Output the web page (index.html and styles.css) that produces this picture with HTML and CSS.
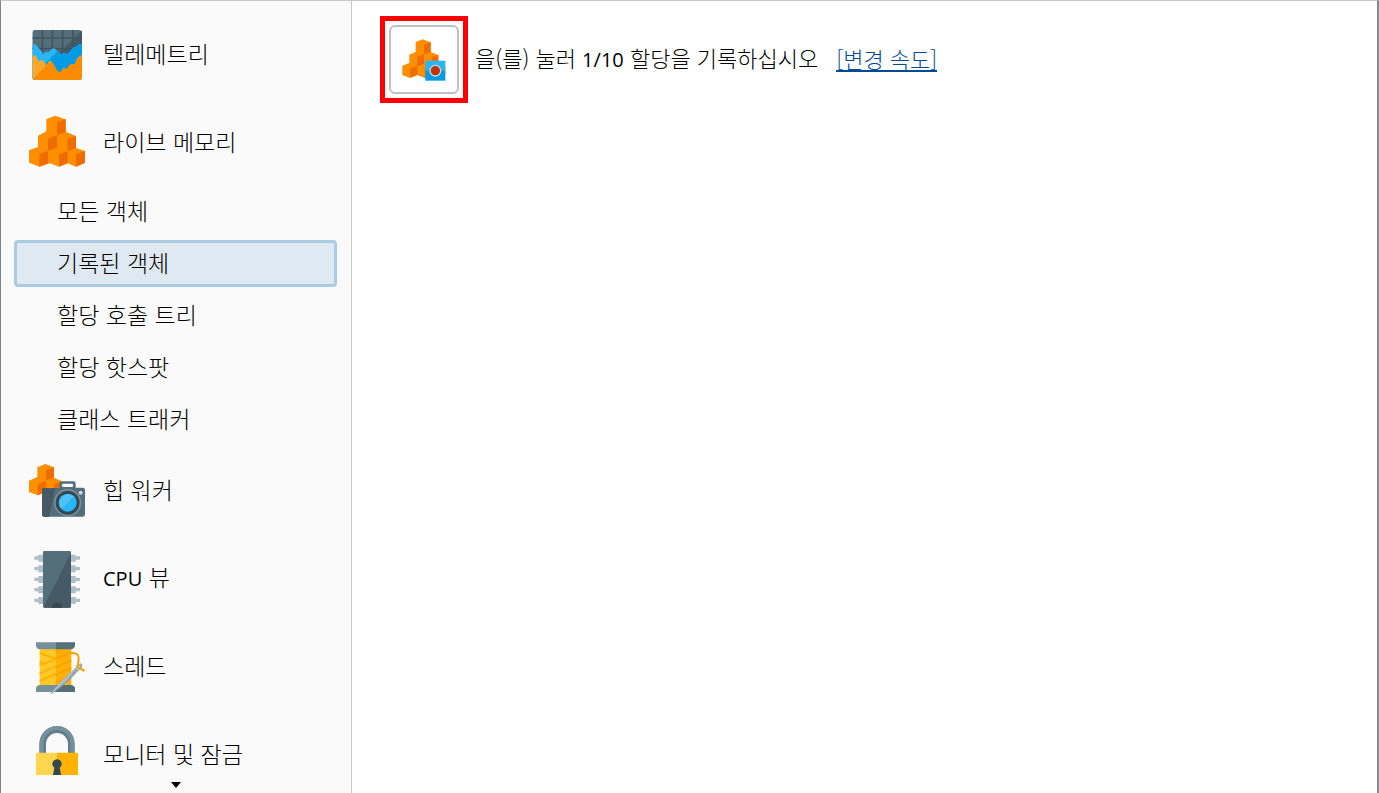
FILE: index.html
```html
<!DOCTYPE html>
<html lang="ko">
<head>
<meta charset="utf-8">
<title>기록된 객체</title>
<link rel="stylesheet" href="styles.css">
</head>
<body>
<div class="window">
  <aside class="sidebar">
    <nav class="nav">
      <a class="section" href="#telemetry">
        <svg class="icon" viewBox="27 21 168 168" aria-hidden="true">
          <defs><clipPath id="chart"><rect x="37" y="30" width="149" height="150" rx="9"/></clipPath></defs>
          <g clip-path="url(#chart)">
            <path fill="#546e7a" d="M37 30h149v150H37z"/>
            <path fill="#455a64" d="M186 30v90H96z"/>
            <path stroke="#3f545f" stroke-width="5" fill="none" d="M67 30v80M97 30v80M128 30v80M159 30v80M37 54h149M37 86h149"/>
            <path fill="#29b6f6" d="M37 76l10-4 8 11 7 8 8 11 8-7 8 2 8-10 9-3 7 8 7 6 6 5 9-4 10 3 9-9 9-11 8-2 10-8 8 2v106H37z"/>
            <path fill="#039be5" d="M112 94l5 4 6 5 9-4 10 3 9-9 9-11 8-2 10-8 8 2v106H37v-8z"/>
            <path fill="#ffa726" d="M37 106l11 2 8 16 8-3 8 3 6 12 12-15 8 8 8 13 5 10 10 6 10-15 8 5 9-12 7-5 9 3 7-17 9-10h6v72H37z"/>
            <path fill="#fb8c00" d="M92 124l6 5 8 13 5 10 10 6 10-15 8 5 9-12 7-5 9 3 7-17 9-10h6v72H37z"/>
          </g>
        </svg>
        <span class="label">텔레메트리</span>
      </a>
      <a class="section" href="#live-memory">
        <svg class="icon" viewBox="27 30 168 168" aria-hidden="true">
          <path fill="#ff8f00" d="M79 43l26-11 32 11v37l31 13v36l27 9v35l-27 12-25-10-26 10-27-10-31 10-32-12v-37l27-10V92l25-13z"/>
          <path fill="#ef6c00" d="M111 52l26-9v38l-26 9zM84 101l27-11v38l-27 9zM143 101l25-8v36l-25 9zM58 148l26-11v38l-26 10zM117 148l26-10v37l-26 10zM168 148l27-10v35l-27 12z"/>
        </svg>
        <span class="label">라이브 메모리</span>
      </a>
      <div class="views">
        <a class="view" href="#all-objects">모든 객체</a>
        <a class="view selected" href="#recorded-objects" aria-current="page">기록된 객체</a>
        <a class="view" href="#allocation-tree">할당 호출 트리</a>
        <a class="view" href="#allocation-hot-spots">할당 핫스팟</a>
        <a class="view" href="#class-tracker">클래스 트래커</a>
      </div>
      <a class="section" href="#heap-walker">
        <svg class="icon" viewBox="27 24 168 168" aria-hidden="true">
          <path fill="#ff8f00" d="M52 37l24-10 26 10v31l24 11v30l-24 9-25-9-24 12-26-10V77l25-11z"/>
          <path fill="#ef6c00" d="M78 45l24-8v31l-24 8zM54 87l24-9v32l-25 11zM102 86l24-6v30H102z"/>
          <path fill="#546e7a" d="M71 99h47V86q0-7 7-7h36q6 0 6 7v12h21q7 0 7 7v73q0 7-7 7H73q-7 0-7-7v-72q0-7 5-7z"/>
          <path fill="#455a64" d="M71 99h16v86H73q-7 0-7-7v-72q0-7 5-7z"/>
          <path fill="#455a64" d="M66 118l28-18h12L87 185H73q-7 0-7-7z"/>
          <rect x="126" y="86" width="33" height="10" rx="3" fill="#fafafa"/>
          <circle cx="143" cy="143" r="41" fill="#78909c"/>
          <circle cx="143" cy="143" r="36" fill="#37474f"/>
          <circle cx="143" cy="143" r="27" fill="#29b6f6"/>
          <path fill="#4fc3f7" d="M124 162a27 27 0 0 1 38-38z"/>
          <circle cx="182" cy="113" r="6" fill="#cfd8dc"/>
        </svg>
        <span class="label">힙 워커</span>
      </a>
      <a class="section" href="#cpu-views">
        <svg class="icon" viewBox="27 33 168 168" aria-hidden="true">
          <g fill="#b0bec5">
            <path id="pin" d="M69 44H55v5H43v10h12v6h14zM153 44h14v5h13v10h-13v6h-14z"/>
            <use href="#pin" y="32"/><use href="#pin" y="64"/><use href="#pin" y="95"/><use href="#pin" y="127"/>
          </g>
          <rect x="69" y="33" width="84" height="170" rx="4" fill="#546e7a"/>
          <path fill="#455a64" d="M153 38v161q0 4-4 4H73l-2-2z"/>
          <path fill="#37474f" d="M95 203a16 16 0 0 1 32 0z"/>
        </svg>
        <span class="label"><span class="latin">CPU</span> 뷰</span>
      </a>
      <a class="section" href="#threads">
        <svg class="icon" viewBox="27 27 168 168" aria-hidden="true">
          <path fill="#ffca28" d="M59 57h47v108H59z"/>
          <path fill="#ffb300" d="M106 57h48v108h-48z"/>
          <path fill="none" stroke="#ffb300" stroke-width="6" d="M59 69l47 17M59 96l20 7M59 106l47-18M59 130l47-20M59 153l47-21"/>
          <path fill="none" stroke="#ffa000" stroke-width="6" d="M106 86l48-18M106 112l48-20M106 134l48-20M106 158l48-21M106 62l18 7"/>
          <path fill="#78909c" d="M48 37h58v21H58q-10-3-10-12zM106 165v21H48v-11q0-7 10-10z"/>
          <path fill="#546e7a" d="M106 37h59v9q0 9-11 12h-48zM106 165h48q11 3 11 10v11h-59z"/>
          <path fill="none" stroke="#ffa000" stroke-width="6" d="M152 69q25-1 24 16t-4 23 11 8l10 7"/>
          <path fill="#90a4ae" d="M181 100q7 2 5 10l-43 46-48 36-4 1 25-32z"/>
          <path fill="#b0bec5" d="M181 100l-65 61-25 32 50-43z"/>
          <path stroke="#eceff1" stroke-width="3" d="M180 107l-10 12"/>
          <path fill="none" stroke="#ffa000" stroke-width="6" d="M172 108q1 6 11 8l10 7"/>
        </svg>
        <span class="label">스레드</span>
      </a>
      <a class="section" href="#monitors">
        <svg class="icon" viewBox="27 36 168 168" aria-hidden="true">
          <path fill="none" stroke="#607d8b" stroke-width="20" d="M68 116V87a43 43 0 0 1 86 0v29"/>
          <path fill="none" stroke="#78909c" stroke-width="12" d="M65 116V85a46 46 0 0 1 92 0v29"/>
          <path fill="#ffd54f" d="M48 117q0-4 4-4h59v91H48z"/>
          <path fill="#ffb300" d="M111 113h59q4 0 4 4v87h-63z"/>
          <path fill="#37474f" d="M103 158a14 14 0 1 1 16 0l6 32H97z"/>
        </svg>
        <span class="label">모니터 및 잠금</span>
      </a>
    </nav>
    <button class="more" type="button" aria-label="아래로 스크롤">
      <svg class="arrow" viewBox="0 0 10 6" aria-hidden="true"><path d="M0 0h10L5 6z"/></svg>
    </button>
  </aside>
  <main class="content">
    <div class="prompt">
      <div class="highlight">
        <button class="record" type="button" aria-label="할당 기록">
          <svg class="record-icon" viewBox="98 100 132 132" aria-hidden="true">
            <defs><linearGradient id="blue" x1="0" y1="0" x2="0" y2="1"><stop offset=".45" stop-color="#29b6f6"/><stop offset=".55" stop-color="#039be5"/></linearGradient></defs>
            <path fill="#ff8f00" d="M139 112L160 104L184 113V142L207 151V179L228 186V212L207 219L187 212L166 220L144 211L122 220L99 211V183L120 175V150L139 142Z"/>
            <path fill="#ef6c00" d="M164 120L184 113V142L164 149ZM144 157L164 149V178L144 185ZM187 157L207 151V179L187 186ZM123 191L144 184V211L123 219ZM166 191L187 184V212L166 220Z"/>
            <rect x="168" y="168" width="60" height="60" fill="url(#blue)"/>
            <circle cx="198" cy="198" r="16" fill="#bf360c" stroke="#cfd8dc" stroke-width="4"/>
          </svg>
        </button>
      </div>
      <p class="message">을(를) 눌러 <span class="latin">1/10</span> 할당을 기록하십시오</p>
      <a class="rate" href="#rate">[변경 속도]</a>
    </div>
  </main>
</div>
</body>
</html>
```
FILE: styles.css
```css
* { box-sizing: border-box; }

body {
  margin: 0;
  font-family: "Noto Sans CJK KR", sans-serif;
  font-size: 23px;
  font-weight: 300;
  line-height: 32px;
  color: #000;
  background: #fff;
}

a { color: inherit; text-decoration: none; }
button { padding: 0; font: inherit; cursor: pointer; }
svg { display: block; flex: none; }

.window {
  display: flex;
  height: 100vh;
  border-top: 1px solid #c8c8c8;
  border-left: 1px solid #7b8790;
  border-right: 2px solid #7f8b94;
}

.sidebar {
  display: flex;
  flex-direction: column;
  flex: none;
  width: 351px;
  border-right: 1px solid #c8c8c8;
  background: #fafafa;
}

.nav {
  flex: 1;
  min-height: 0;
  padding-top: 10px;
  overflow: hidden;
}

.section {
  display: flex;
  align-items: center;
  gap: 18px;
  height: 88px;
  padding-left: 28px;
}

.icon { width: 56px; height: 56px; overflow: visible; }
.label { padding-bottom: 4px; }
.latin { font-family: "Open Sans", sans-serif; font-size: 20px; font-weight: 400; }

.views {
  display: flex;
  flex-direction: column;
  gap: 5px;
  padding: 1px 14px 4px 13px;
}

.view {
  display: flex;
  align-items: center;
  height: 47px;
  padding: 0 0 3px 40px;
  border: 3px solid transparent;
  border-radius: 4px;
}

.selected { border-color: #abcbe3; background: #dfe9f2; }

.more {
  display: flex;
  justify-content: center;
  align-items: center;
  height: 18px;
  padding-top: 2px;
  border: 0;
  background: none;
}

.arrow { width: 10px; height: 6px; }

.content { flex: 1; min-width: 0; padding: 15px 28px; }
.prompt { display: flex; align-items: center; font-size: 22px; }

.highlight { padding: 4px; border: 5px solid #f00; }

.record {
  display: flex;
  justify-content: center;
  align-items: center;
  width: 70px;
  height: 69px;
  border: 2px solid #c0c0c0;
  border-radius: 6px;
  background: #fff;
}

.record-icon { width: 44px; height: 44px; }

.message { margin: 0 18px 0 7px; padding-bottom: 2px; }

.rate {
  margin-bottom: 2px;
  color: #004b93;
  line-height: 24px;
  border-bottom: 2px solid #004b93;
}
```
